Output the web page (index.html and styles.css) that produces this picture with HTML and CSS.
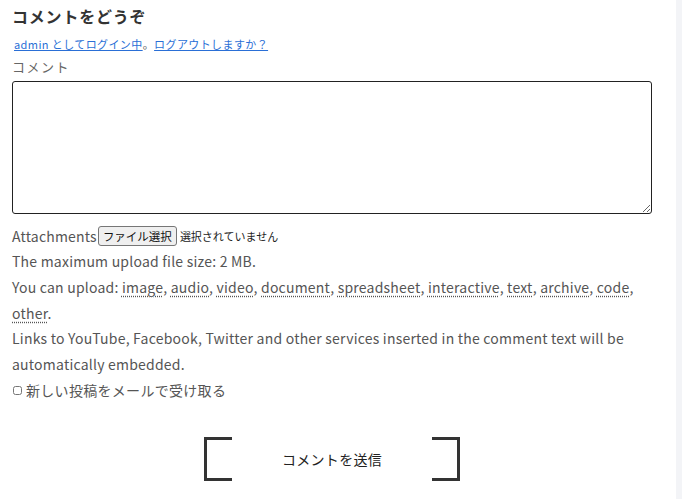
FILE: index.html
```html
<!DOCTYPE html>
<html lang="ja">
<head>
<meta charset="utf-8">
<link rel="stylesheet" href="styles.css">
</head>
<body>
<div class="page">
  <main class="content">
    <h3 class="title">コメントをどうぞ</h3>
    <p class="logged"><a href="#">admin としてログイン中</a>。<a href="#">ログアウトしますか？</a></p>
    <label class="label">コメント</label>
    <textarea class="comment"></textarea>
    <div class="attach"><span>Attachments</span><span class="filebtn">ファイル選択</span><span class="nofile">選択されていません</span></div>
    <p class="info">The maximum upload file size: 2 MB.</p>
    <p class="info">You can upload: <abbr>image</abbr>, <abbr>audio</abbr>, <abbr>video</abbr>, <abbr>document</abbr>, <abbr>spreadsheet</abbr>, <abbr>interactive</abbr>, <abbr>text</abbr>, <abbr>archive</abbr>, <abbr>code</abbr>, <abbr>other</abbr>.</p>
    <p class="info">Links to YouTube, Facebook, Twitter and other services inserted in the comment text will be automatically embedded.</p>
    <label class="subscribe"><input type="checkbox" class="check">新しい投稿をメールで受け取る</label>
    <div class="submit-row"><button class="submit">コメントを送信</button></div>
  </main>
  <aside class="strip"></aside>
</div>
</body>
</html>
```
FILE: styles.css
```css
html, body {
  margin: 0;
  padding: 0;
}
body {
  font-family: "Noto Sans CJK JP", "Noto Sans", sans-serif;
  color: #555;
  background: #fff;
}
.page {
  display: flex;
  justify-content: space-between;
  width: 682px;
  height: 499px;
  overflow: hidden;
}
.content {
  width: 640px;
  padding: 0 0 0 12px;
  background: #fff;
}
.strip {
  width: 6px;
  background: #f3f4f7;
}
.title {
  margin: 0;
  padding-top: 4px;
  font-size: 16px;
  line-height: 24px;
  font-weight: bold;
  color: #333;
  letter-spacing: 0.8px;
}
.logged {
  margin: 7px 0 0 2px;
  font-size: 11px;
  line-height: 18px;
  letter-spacing: 0.4px;
}
.logged a {
  color: #2a6fd6;
  text-decoration: underline;
}
.label {
  display: block;
  margin-top: 4px;
  font-size: 13px;
  line-height: 20px;
  letter-spacing: 1.5px;
  color: #666;
}
.comment {
  display: block;
  box-sizing: border-box;
  width: 640px;
  height: 133px;
  margin: 4px 0 0;
  border: 1px solid #222;
  border-radius: 3px;
  resize: vertical;
}
.attach {
  display: flex;
  align-items: center;
  margin: 11px 0 2px;
  font-size: 14px;
  height: 22px;
  letter-spacing: 0.2px;
}
.filebtn {
  box-sizing: border-box;
  height: 20px;
  padding: 0 4px;
  margin: 0 3px 0 1px;
  border: 1px solid #767676;
  border-radius: 3px;
  background: #efefef;
  color: #111;
  font-size: 11.5px;
  line-height: 18px;
  letter-spacing: 0;
}
.nofile {
  font-size: 11px;
  color: #222;
  letter-spacing: 0;
}
.info {
  margin: 0;
  font-size: 14px;
  line-height: 25.8px;
  letter-spacing: 0.22px;
}
abbr {
  text-decoration: underline dotted;
  text-underline-offset: 3px;
}
.subscribe {
  display: flex;
  align-items: center;
  font-size: 14px;
  line-height: 25px;
  color: #555;
  letter-spacing: 0.3px;
}
.check {
  width: 9px;
  height: 9px;
  margin: 0 4px 0 1px;
}
.submit-row {
  display: flex;
  justify-content: flex-start;
  padding: 34px 0 0 192px;
}
.submit {
  position: relative;
  width: 256px;
  height: 44px;
  border: none;
  background: transparent;
  font-family: "Noto Sans CJK JP", sans-serif;
  font-size: 14px;
  color: #222;
  letter-spacing: 0.3px;
  cursor: pointer;
}
.submit::before,
.submit::after {
  content: "";
  position: absolute;
  top: 0;
  width: 25px;
  height: 38px;
  border: 3px solid #333;
}
.submit::before {
  left: 0;
  border-right: none;
}
.submit::after {
  right: 0;
  border-left: none;
}
```
